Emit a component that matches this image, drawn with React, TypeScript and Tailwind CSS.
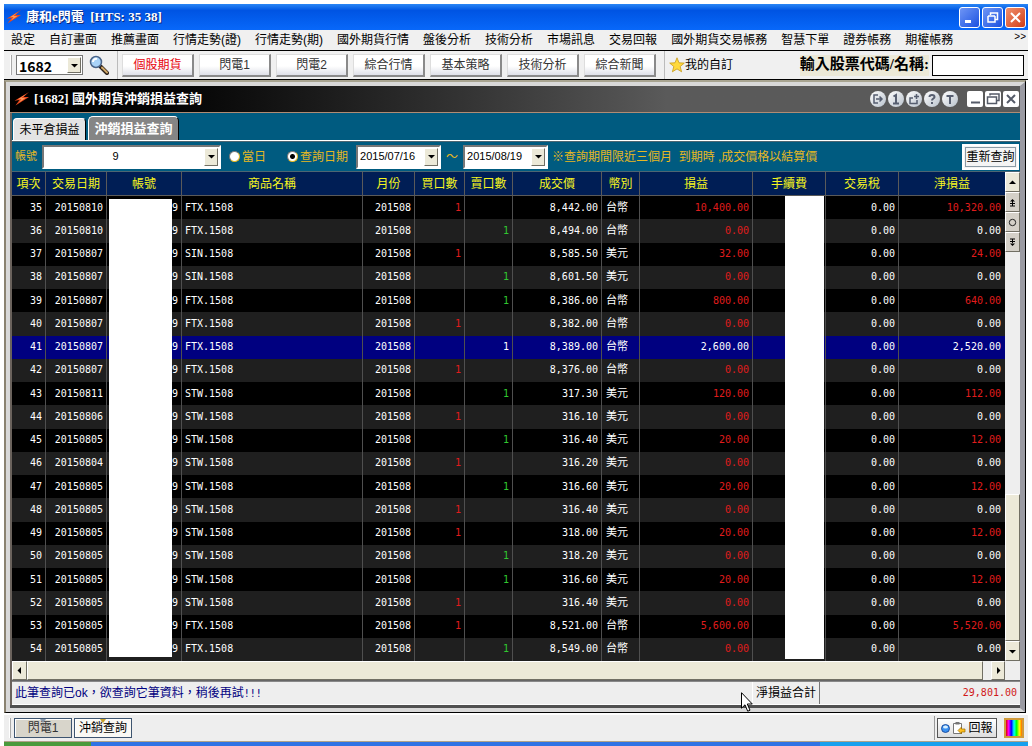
import type { ReactNode } from 'react'
import { clsx } from 'clsx'

type Trade = {
  no: number
  date: string
  product: string
  side: 'buy' | 'sell'
  price: string
  currency: string
  profit: string
  net: string
}

const trade = (
  no: number,
  date: string,
  product: string,
  side: 'buy' | 'sell',
  price: string,
  currency: string,
  profit = '0.00',
  net = '0.00'
): Trade => ({ no, date, product, side, price, currency, profit, net })

const TRADES: Trade[] = [
  trade(35, '20150810', 'FTX.1508', 'buy', '8,442.00', '台幣', '10,400.00', '10,320.00'),
  trade(36, '20150810', 'FTX.1508', 'sell', '8,494.00', '台幣'),
  trade(37, '20150807', 'SIN.1508', 'buy', '8,585.50', '美元', '32.00', '24.00'),
  trade(38, '20150807', 'SIN.1508', 'sell', '8,601.50', '美元'),
  trade(39, '20150807', 'FTX.1508', 'sell', '8,386.00', '台幣', '800.00', '640.00'),
  trade(40, '20150807', 'FTX.1508', 'buy', '8,382.00', '台幣'),
  trade(41, '20150807', 'FTX.1508', 'sell', '8,389.00', '台幣', '2,600.00', '2,520.00'),
  trade(42, '20150807', 'FTX.1508', 'buy', '8,376.00', '台幣'),
  trade(43, '20150811', 'STW.1508', 'sell', '317.30', '美元', '120.00', '112.00'),
  trade(44, '20150806', 'STW.1508', 'buy', '316.10', '美元'),
  trade(45, '20150805', 'STW.1508', 'sell', '316.40', '美元', '20.00', '12.00'),
  trade(46, '20150804', 'STW.1508', 'buy', '316.20', '美元'),
  trade(47, '20150805', 'STW.1508', 'sell', '316.60', '美元', '20.00', '12.00'),
  trade(48, '20150805', 'STW.1508', 'buy', '316.40', '美元'),
  trade(49, '20150805', 'STW.1508', 'buy', '318.00', '美元', '20.00', '12.00'),
  trade(50, '20150805', 'STW.1508', 'sell', '318.20', '美元'),
  trade(51, '20150805', 'STW.1508', 'sell', '316.60', '美元', '20.00', '12.00'),
  trade(52, '20150805', 'STW.1508', 'buy', '316.40', '美元'),
  trade(53, '20150805', 'FTX.1508', 'buy', '8,521.00', '台幣', '5,600.00', '5,520.00'),
  trade(54, '20150805', 'FTX.1508', 'sell', '8,549.00', '台幣'),
]

const SELECTED = 41

const MENU = [
  '設定', '自訂畫面', '推薦畫面', '行情走勢(證)', '行情走勢(期)', '國外期貨行情', '盤後分析',
  '技術分析', '市場訊息', '交易回報', '國外期貨交易帳務', '智慧下單', '證券帳務', '期權帳務',
]

const SHORTCUTS = ['個股期貨', '閃電1', '閃電2', '綜合行情', '基本策略', '技術分析', '綜合新聞']

// the product name column has no width and takes what is left
const COLUMNS = [
  { label: '項次', width: 'w-[34px]' },
  { label: '交易日期', width: 'w-[61px]' },
  { label: '帳號', width: 'w-[75px]' },
  { label: '商品名稱', width: '' },
  { label: '月份', width: 'w-[52px]' },
  { label: '買口數', width: 'w-[50px]' },
  { label: '賣口數', width: 'w-[48px]' },
  { label: '成交價', width: 'w-[89px]' },
  { label: '幣別', width: 'w-[38px]' },
  { label: '損益', width: 'w-[113px]' },
  { label: '手續費', width: 'w-[73px]' },
  { label: '交易稅', width: 'w-[73px]' },
  { label: '淨損益', width: 'w-[106px]' },
]

const SERIF = "font-['Liberation_Serif','Noto_Sans_CJK_TC',serif]"
const MONO = "font-['DejaVu_Sans_Mono','Noto_Sans_CJK_TC',monospace]"
const RAISED = 'border border-t-white border-l-white border-r-[#716f64] border-b-[#716f64]'

function Bolt() {
  return (
    <svg viewBox="0 0 16 14" className="h-3.5 w-4 shrink-0" aria-hidden="true">
      <path d="M15 0 9.500 5H15L1.500 13.500 5.500 8 .5 8.800Z" fill="#e8481c" />
      <path d="M12 2 7.500 6h4L5 10.500 7.500 7 4 7.300Z" fill="#ff9a5c" />
    </svg>
  )
}

function Arrow({ dir }: { dir: 'up' | 'down' | 'left' | 'right' }) {
  const paths = {
    up: 'M0 5 3.500 1.500 7 5Z',
    down: 'M0 2 3.500 5.500 7 2Z',
    left: 'M5 0 1.500 3.500 5 7Z',
    right: 'M2 0 5.500 3.500 2 7Z',
  }
  return (
    <svg viewBox="0 0 7 7" className="size-[7px]" aria-hidden="true">
      <path d={paths[dir]} fill="#000" />
    </svg>
  )
}

function DropDown({ label, value, className, selectClass }: { label: string; value: string; className: string; selectClass: string }) {
  return (
    <div className={clsx('relative bg-white', className)}>
      <select aria-label={label} className={clsx('block h-full w-full appearance-none bg-transparent outline-none', selectClass)}>
        <option>{value}</option>
      </select>
      <span className={clsx('pointer-events-none absolute inset-y-px right-px flex w-3.5 items-center justify-center bg-[#ece9d8]', RAISED)}>
        <Arrow dir="down" />
      </span>
    </div>
  )
}

function TitleButton({ label, className, children }: { label: string; className: string; children: ReactNode }) {
  return (
    <button aria-label={label} className={clsx('flex size-[21px] items-center justify-center rounded-[3px] border border-white', className)}>
      <svg viewBox="0 0 15 15" className="size-[15px]" fill="none" stroke="#fff" strokeWidth="2" aria-hidden="true">
        {children}
      </svg>
    </button>
  )
}

function TitleBar() {
  return (
    <header className="flex h-[26px] shrink-0 items-center bg-linear-to-b from-[#2a86f5] via-[#0054e3] via-25% to-[#0868fa] pr-0.5 pl-0.5">
      <Bolt />
      <h1 className={clsx('ml-1 flex-1 text-[13px] font-bold whitespace-pre text-white [text-shadow:1px_1px_#0a2a80]', SERIF)}>
        康和e閃電  [HTS: 35 38]
      </h1>
      <div className="flex gap-0.5">
        <TitleButton label="最小化" className="bg-linear-to-br from-[#6f95f5] to-[#1b4fe0]">
          <path d="M3 11.500h6" strokeWidth="3" />
        </TitleButton>
        <TitleButton label="還原" className="bg-linear-to-br from-[#6f95f5] to-[#1b4fe0]">
          <path d="M5.500 5V3h7v6.500H10M3 6h7M3 6v6h7V6" strokeWidth="1.500" />
        </TitleButton>
        <TitleButton label="關閉" className="bg-linear-to-br from-[#f0906c] to-[#d03a10]">
          <path d="m3 3 9 9M12 3l-9 9" />
        </TitleButton>
      </div>
    </header>
  )
}

function MenuBar() {
  return (
    <nav className="flex h-[21px] shrink-0 items-center justify-between border-b border-black bg-[#f0f0f0] pr-0.5 pl-[7px] text-xs">
      <ul className="flex gap-3.5">
        {MENU.map((item) => (
          <li key={item} className="whitespace-nowrap">
            <a href="#">{item}</a>
          </li>
        ))}
      </ul>
      <button aria-label="更多" className="self-start text-[10px] leading-3.5">&gt;&gt;</button>
    </nav>
  )
}

function Magnifier() {
  return (
    <svg viewBox="0 0 20 20" className="size-5 shrink-0" aria-hidden="true">
      <path d="m11.500 11.500 6.500 6.500" stroke="#2b2018" strokeWidth="4" strokeLinecap="round" />
      <path d="m13 12.500 5 5" stroke="#d0a868" strokeWidth="2" strokeLinecap="round" />
      <circle cx="7" cy="7" r="5.500" fill="#a9d3f8" stroke="#4a6488" strokeWidth="1.500" />
      <path d="M4 7a3 3 0 0 1 4-3" fill="none" stroke="#fff" strokeWidth="2" />
    </svg>
  )
}

function ToolBar() {
  return (
    <div className="flex h-[29px] shrink-0 items-center border-b border-black bg-[#f0f0f0] pr-1 pl-1.5 text-xs">
      <i className="mr-1 h-5 w-0.5 border-r border-[#aaa] bg-white" />
      <DropDown
        label="畫面代碼"
        value="1682"
        className="h-5 w-[67px] border border-[#777]"
        selectClass="bg-[#eaf2fb] pl-0.5 text-sm font-bold font-['Noto_Sans_CJK_TC',sans-serif]"
      />
      <button aria-label="搜尋" className="ml-1.5"><Magnifier /></button>
      <i className="mx-2 h-7 w-px bg-[#bbb]" />
      <div className="-ml-1 flex gap-[5px]">
        {SHORTCUTS.map((item, i) => (
          <button
            key={item}
            className={clsx(
              'h-[23px] w-[72px] border border-r-2 border-b-2 border-t-[#ddd] border-l-[#ddd] border-r-[#8a8a8a] border-b-[#8a8a8a] bg-linear-to-b from-white via-white via-55% to-[#dfe0e8]',
              i === 0 ? 'text-red-600' : 'text-[#333]'
            )}
          >
            {item}
          </button>
        ))}
      </div>
      <i className="mr-1 ml-2 h-7 w-px bg-[#bbb]" />
      <button className="flex items-center">
        <svg viewBox="0 0 16 16" className="size-4" aria-hidden="true">
          <path d="m8 .8 2 5 5.300.3-4.100 3.400 1.400 5.300L8 11.900l-4.600 2.900 1.400-5.300L.7 6.100 6 5.800Z" fill="#ffd93b" stroke="#c79a1c" strokeWidth=".8" />
        </svg>
        我的自訂
      </button>
      <label htmlFor="stock" className={clsx('mr-[3px] ml-auto h-[21px] bg-[#ece9d8] text-[15px] leading-[18px] font-bold', SERIF)}>
        輸入股票代碼/名稱:
      </label>
      <input id="stock" className="h-[21px] w-[92px] border border-black bg-white px-1 outline-none" />
    </div>
  )
}

function RoundButton({ label, children }: { label: string; children: ReactNode }) {
  return (
    <button aria-label={label} className="size-4 rounded-full bg-linear-to-br from-white to-[#b9c2cc]">
      <svg viewBox="0 0 16 16" className="size-4" fill="none" stroke="#565e70" strokeWidth="1.500" aria-hidden="true">
        {children}
      </svg>
    </button>
  )
}

function PaneButton({ label, children }: { label: string; children: ReactNode }) {
  return (
    <button aria-label={label} className="size-4 rounded-[2px] bg-white">
      <svg viewBox="0 0 16 16" className="size-4" fill="none" stroke="#555b68" strokeWidth="2" aria-hidden="true">
        {children}
      </svg>
    </button>
  )
}

function PaneTitle() {
  return (
    <div className="flex h-[27px] shrink-0 items-center border-b border-[#b08c74] bg-linear-to-r from-black to-[#5a5a5a] to-65% pr-px pl-1">
      <Bolt />
      <h2 className={clsx('ml-1 flex-1 text-[13px] font-bold text-white', SERIF)}>[1682] 國外期貨沖銷損益查詢</h2>
      <div className="mr-[9px] flex gap-0.5">
        <RoundButton label="匯出">
          <path d="M8 4H4v8h4M6 8h6M9.500 5.500 12 8 9.500 10.500" />
        </RoundButton>
        <RoundButton label="連結">
          <path d="M5.500 5.500 8 4v8.500M5 12.500h6" strokeWidth="2" />
        </RoundButton>
        <RoundButton label="新增">
          <path d="M7 7H4v5.500h7V9M10.500 3v5M8 5.500h5" />
        </RoundButton>
        <RoundButton label="說明">
          <path d="M5.500 6c0-2.700 5-2.700 5 0 0 1.500-2.500 1.500-2.500 3.500M8 11v2" strokeWidth="2" />
        </RoundButton>
        <RoundButton label="文字">
          <path d="M4.500 5h7M8 5v8" strokeWidth="2" />
        </RoundButton>
      </div>
      <div className="flex gap-0.5">
        <PaneButton label="最小化"><path d="M4 11.500h9" /></PaneButton>
        <PaneButton label="還原"><path d="M5 4.500V3h9v6.500h-2M2.500 6h9v6.500h-9Z" strokeWidth="1.500" /></PaneButton>
        <PaneButton label="關閉"><path d="m4 4 8 8M12 4l-8 8" /></PaneButton>
      </div>
    </div>
  )
}

function Tabs() {
  return (
    <div role="tablist" className="flex h-7 shrink-0 items-end gap-0.5 border-b border-white bg-[#005b80] pl-px">
      <button role="tab" aria-selected="false" className="h-[22px] w-[73px] rounded-t-[4px] border border-b-0 border-white border-r-black bg-[#e4e4e4] text-xs">
        未平倉損益
      </button>
      <button role="tab" aria-selected="true" className="h-6 w-[91px] rounded-t-[5px] border border-b-0 border-white border-r-black bg-[#858585] text-[13px] leading-5 font-bold text-white">
        沖銷損益查詢
      </button>
    </div>
  )
}

function Radio({ label, checked }: { label: string; checked?: boolean }) {
  return (
    <label className="flex items-center gap-0.5">
      <input
        type="radio"
        name="range"
        defaultChecked={checked}
        className="size-[11px] appearance-none rounded-full border border-t-[#777] border-l-[#777] bg-white checked:bg-[radial-gradient(circle,#000_2px,#fff_3px)]"
      />
      {label}
    </label>
  )
}

function FilterBar() {
  const dateClass = "pl-0.5 text-[11px] text-black font-['Liberation_Sans',sans-serif]"
  const box = 'border-2 border-t-[#777] border-l-[#777] border-r-white border-b-white'
  return (
    <div className="flex h-[31px] shrink-0 items-center border-y border-[#4d6672] bg-[#005b80] pr-px pl-[3px] text-xs whitespace-nowrap text-[#e6b822]">
      <span className="w-[27px] text-[11px]">帳號</span>
      <DropDown
        label="帳號"
        value="9"
        className={clsx('h-6 w-[179px]', box)}
        selectClass="pr-8 text-center text-[11px] text-black font-['Liberation_Sans',sans-serif]"
      />
      <div className="ml-2 flex gap-[21px]">
        <Radio label="當日" />
        <Radio label="查詢日期" checked />
      </div>
      <DropDown label="起始日期" value="2015/07/16" className={clsx('ml-2 h-6 w-[85px]', box)} selectClass={dateClass} />
      <span className="w-[22px] text-center">～</span>
      <DropDown label="結束日期" value="2015/08/19" className={clsx('h-6 w-[85px]', box)} selectClass={dateClass} />
      <span className="ml-1 flex-1">※查詢期間限近三個月&nbsp; 到期時 ,成交價格以結算價</span>
      <button className="h-[26px] w-[57px] border-2 border-white bg-[#f4f4f4] text-black outline outline-[#8a9aa5] -outline-offset-4">
        重新查詢
      </button>
    </div>
  )
}

function TradeRow({ row }: { row: Trade }) {
  const selected = row.no === SELECTED
  const line = 'border-r border-[#4f4f4f] p-0'
  const right = 'pr-[3px] text-right'
  const red = selected ? 'text-white' : 'text-[#e01c1c]'
  return (
    <tr className={selected ? 'bg-[#000080]' : 'odd:bg-black even:bg-[#1f1f1f]'}>
      <td className={clsx(line, right)}>{row.no}</td>
      <td className={clsx(line, right)}>{row.date}</td>
      <td className={clsx(line, right)}>9</td>
      <td className={clsx(line, 'pl-[3px]')}>{row.product}</td>
      <td className={clsx(line, right)}>201508</td>
      <td className={clsx(line, right, red)}>{row.side === 'buy' && '1'}</td>
      <td className={clsx(line, right, selected ? 'text-white' : 'text-[#30c830]')}>{row.side === 'sell' && '1'}</td>
      <td className={clsx(line, right)}>{row.price}</td>
      <td className={clsx(line, 'pl-1 text-[11px]')}>{row.currency}</td>
      <td className={clsx(line, right, red)}>{row.profit}</td>
      <td className={line} />
      <td className={clsx(line, right)}>0.00</td>
      <td className={clsx('p-0 pr-1 text-right', row.net !== '0.00' && red)}>{row.net}</td>
    </tr>
  )
}

function TradeTable() {
  return (
    <div className="relative min-w-0 flex-1">
      <table className={clsx('h-full w-full table-fixed border-separate border-spacing-0 bg-black text-[10px] leading-4 text-white', MONO)}>
        <thead>
          <tr className="h-6 bg-[#001e55] text-xs text-[#f5f520]">
            {COLUMNS.map((col) => (
              <th key={col.label} className={clsx('border-r border-b border-[#5a5a5a] p-0 font-normal whitespace-nowrap last:border-r-0', col.width)}>
                {col.label}
              </th>
            ))}
          </tr>
        </thead>
        <tbody>
          {TRADES.map((row) => (
            <TradeRow key={row.no} row={row} />
          ))}
        </tbody>
      </table>
      {/* masks over the account numbers and the fees */}
      <div className="absolute top-[27px] bottom-1 left-[97px] w-[63px] bg-white" />
      <div className="absolute top-6 right-[181px] bottom-0.5 w-[39px] bg-white" />
    </div>
  )
}

function ScrollButton({ label, className, children }: { label: string; className: string; children: ReactNode }) {
  return (
    <button aria-label={label} className={clsx('flex shrink-0 items-center justify-center', RAISED, className)}>
      {children}
    </button>
  )
}

function VerticalScroll() {
  return (
    <div className="flex w-[15px] shrink-0 flex-col bg-[#eee]">
      <ScrollButton label="向上" className="h-5 bg-[#ece9d8]"><Arrow dir="up" /></ScrollButton>
      <ScrollButton label="上一頁" className="h-5 bg-[#d4d0c8]">
        <svg viewBox="0 0 9 9" className="size-[9px]" aria-hidden="true">
          <path d="M2 3.500 4.500 1 7 3.500ZM4 3h1v5H4ZM2 5h5v1H2ZM2 7.500h5v1H2Z" />
        </svg>
      </ScrollButton>
      <ScrollButton label="定位" className="h-5 bg-[#d4d0c8]">
        <svg viewBox="0 0 9 9" className="size-[9px]" fill="none" stroke="#222" aria-hidden="true">
          <circle cx="4.500" cy="4.500" r="3.200" />
        </svg>
      </ScrollButton>
      <ScrollButton label="下一頁" className="h-5 bg-[#d4d0c8]">
        <svg viewBox="0 0 9 9" className="size-[9px]" aria-hidden="true">
          <path d="M2 5.500 4.500 8 7 5.500ZM4 1h1v5H4ZM2 3h5v1H2ZM2 .5h5v1H2Z" />
        </svg>
      </ScrollButton>
      <div className="flex-5" />
      <div className={clsx('flex-3 bg-[#ece9d8]', RAISED)} />
      <ScrollButton label="向下" className="h-5 bg-[#ece9d8]"><Arrow dir="down" /></ScrollButton>
    </div>
  )
}

function HorizontalScroll() {
  return (
    <div className="flex h-5 shrink-0 border-b border-[#666] bg-[#eee] pr-[15px]">
      <ScrollButton label="向左" className="w-[15px] bg-[#ece9d8]"><Arrow dir="left" /></ScrollButton>
      <div className={clsx('mr-2 flex-1 bg-[#ece9d8]', RAISED)} />
      <ScrollButton label="向右" className="w-3.5 bg-[#ece9d8]"><Arrow dir="right" /></ScrollButton>
    </div>
  )
}

function StatusBar() {
  return (
    <div className="flex h-6 shrink-0 items-stretch border-t border-b border-t-[#888] border-b-white bg-[#eee] text-xs leading-[22px]">
      <p className="flex-1 pl-[3px] text-[#000080]">
        此筆查詢已ok，欲查詢它筆資料，稍後再試<span className={clsx('text-[10px]', MONO)}>!!!</span>
      </p>
      <div className="relative w-[68px] border-r border-l border-l-white border-r-[#777] text-center">
        淨損益合計
        <svg viewBox="0 0 12 20" className="absolute top-2.5 -left-3 h-5 w-3" aria-hidden="true">
          <path d="M.5.7v15.500l3.500-3.400 2.700 6.400 2.300-1-2.700-6.200h5Z" fill="#fff" stroke="#000" />
        </svg>
      </div>
      <output className={clsx('w-[200px] pr-[3px] text-right text-[10px] text-[#d01818]', MONO)}>29,801.00</output>
    </div>
  )
}

function WindowBar() {
  const tab = 'relative h-5 w-[58px] border border-[#3d5470] shadow-[inset_1px_1px_#fff]'
  return (
    <footer className="flex h-[29px] shrink-0 items-center border-t-2 border-b border-t-white border-b-[#b0a288] bg-[#eee] px-1 pl-[5px] text-xs">
      <i className="mr-[3px] h-5 w-0.5 border-r border-[#aaa] bg-white" />
      <div className="flex flex-1 gap-0.5">
        <button className={clsx(tab, 'bg-[#d8d5cb] text-[#333]')}>
          <i className="absolute top-0 left-1/2 h-1 w-1.5 -translate-x-1/2 bg-[#8696a8] [clip-path:polygon(0_0,100%_0,50%_100%)]" />
          閃電1
        </button>
        <button className={clsx(tab, 'bg-[#faf9f4]')}>
          <i className="absolute top-0 left-1/2 h-1 w-1.5 -translate-x-1/2 bg-[#c9a22a] [clip-path:polygon(0_0,100%_0,50%_100%)]" />
          沖銷查詢
        </button>
      </div>
      <i className="mr-0.5 h-6 w-px bg-[#999]" />
      <button className="flex h-5 w-[60px] items-center justify-center gap-0.5 border border-[#555] bg-linear-to-b from-white to-[#ddd]">
        <svg viewBox="0 0 9 9" className="size-[9px] shrink-0" aria-hidden="true">
          <circle cx="4.500" cy="4.500" r="4" fill="#3a90f0" stroke="#0a3a90" strokeWidth=".8" />
          <ellipse cx="4.500" cy="3" rx="2.500" ry="1.500" fill="#d8f0ff" />
        </svg>
        <svg viewBox="0 0 14 14" className="size-3.5 shrink-0" aria-hidden="true">
          <path d="M1.500 2.500h8v10h-8Z" fill="#fff" stroke="#777" />
          <path d="M3.500 1h4v2.500h-4Z" fill="#777" />
          <path d="M6 9.500 9.500 6v2H13v3H9.500v2Z" fill="#ffc020" stroke="#9a6a00" strokeWidth=".7" />
        </svg>
        回報
      </button>
      <button aria-label="色彩" className="ml-[7px] size-5 border-2 border-[#d09a3a] bg-[linear-gradient(to_right,#e00000,#f0f,#00f,#0ff,#0f0,#ff0,#f60)]" />
    </footer>
  )
}

export default function App() {
  return (
    <div className="flex h-screen min-h-[640px] flex-col bg-white px-1 pt-1 font-['Liberation_Sans','Noto_Sans_CJK_TC',sans-serif] text-black">
      <TitleBar />
      <MenuBar />
      <ToolBar />
      <main className="mr-0.5 flex min-h-0 flex-1 flex-col border-t-2 border-r border-b border-l-2 border-t-[#a8a490] border-r-black border-b-black border-l-[#8a8270]">
        <div className="flex min-h-0 flex-1 flex-col border-4 border-r-5 border-[#d8d8d8] border-r-[#9a9aa2]">
          <div className="flex min-h-0 flex-1 flex-col border-b-3 border-b-[#505050]">
            <PaneTitle />
            <div className="flex min-h-0 flex-1 flex-col border-l-2 border-[#6a625c]">
              <Tabs />
              <FilterBar />
              <div className="flex min-h-0 flex-1">
                <TradeTable />
                <VerticalScroll />
              </div>
              <HorizontalScroll />
              <StatusBar />
            </div>
          </div>
        </div>
      </main>
      <WindowBar />
      <div className="flex h-1 shrink-0">
        <i className="w-[87px] bg-[#4a9a3c]" />
        <i className="flex-1 bg-[#2f72e4]" />
        <i className="w-[208px] bg-[#18a0ee]" />
      </div>
    </div>
  )
}
